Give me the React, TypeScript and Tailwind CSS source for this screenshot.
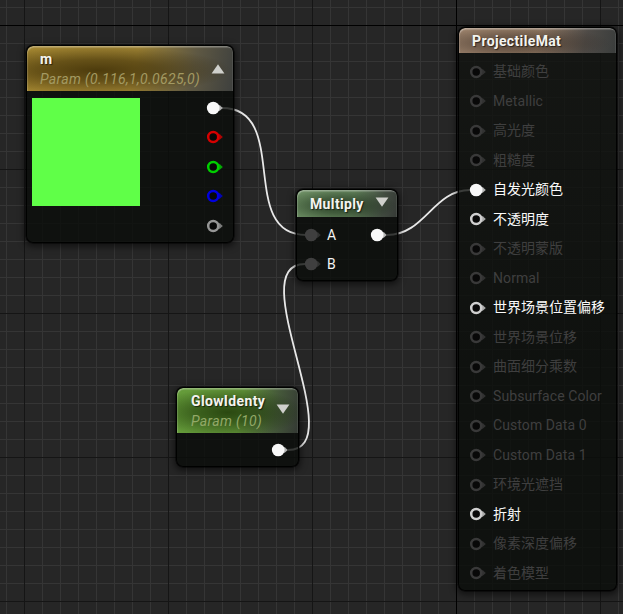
import type { ReactNode } from 'react';

const FONT = "font-['Roboto','Noto_Sans_CJK_SC',sans-serif]";

type PinProps = { color: string; filled?: boolean };

function Pin({ color, filled = false }: PinProps) {
  return (
    <svg className="block h-[14px] w-[18px] shrink-0" viewBox="0 0 18 14">
      <path d="M12 3.6 L14 4.4 L16.8 7 L14 9.6 L12 10.4 Z" fill={color} opacity={filled ? 0.7 : 0.8} />
      <circle cx="7.2" cy="7" r={filled ? 6.3 : 5} fill={filled ? color : '#080808'} stroke={filled ? 'none' : color} strokeWidth="2.5" />
    </svg>
  );
}

function Arrow({ up = false }: { up?: boolean }) {
  return (
    <svg className="block h-[10px] w-[14px]" viewBox="0 0 14 10">
      <path d={up ? 'M7 0.3 L13.4 9.6 H0.6 Z' : 'M0.6 0.4 H13.4 L7 9.7 Z'} fill="#cfd0cc" />
    </svg>
  );
}

function Node({ place, children }: { place: string; children: ReactNode }) {
  return (
    <section
      className={`absolute overflow-hidden rounded-[7px] border border-black/90 shadow-[0_0_0_0.5px_rgba(0,0,0,0.8),0_2px_6px_2px_rgba(0,0,0,0.5)] ${place}`}
    >
      {children}
    </section>
  );
}

const HEADER = 'relative shrink-0 rounded-t-[6px] shadow-[inset_1px_2px_1px_-0.5px_rgba(255,255,255,0.32),inset_-1px_0_0_rgba(255,255,255,0.08)]';
const TITLE = 'whitespace-nowrap text-[14px] leading-[18px] font-bold tracking-[0.36px] text-[#f4f4f0] [text-shadow:1px_1px_1px_rgba(0,0,0,0.6)]';
const SUB = 'whitespace-nowrap text-[14px] leading-[20px] italic tracking-[0.36px]';

const outputs = [
  { name: 'rgb', color: '#f8f8f8', filled: true },
  { name: 'r', color: '#d60000' },
  { name: 'g', color: '#00cf00' },
  { name: 'b', color: '#0000df' },
  { name: 'a', color: '#969696' },
];

const inputs = [
  { label: '基础颜色' },
  { label: 'Metallic', latin: true },
  { label: '高光度' },
  { label: '粗糙度' },
  { label: '自发光颜色', on: true, filled: true },
  { label: '不透明度', on: true },
  { label: '不透明蒙版' },
  { label: 'Normal', latin: true },
  { label: '世界场景位置偏移', on: true },
  { label: '世界场景位移' },
  { label: '曲面细分乘数' },
  { label: 'Subsurface Color', latin: true },
  { label: 'Custom Data 0', latin: true },
  { label: 'Custom Data 1', latin: true },
  { label: '环境光遮挡' },
  { label: '折射', on: true },
  { label: '像素深度偏移' },
  { label: '着色模型' },
];

function Grid() {
  const xs = Array.from({ length: 35 }, (_, i) => 6 + i * 18);
  const ys = Array.from({ length: 34 }, (_, i) => 7 + i * 18);
  return (
    <g shapeRendering="crispEdges">
      {xs.map((x) => <rect key={x} x={x} y="0" width="1" height="614" fill="#353535" />)}
      {ys.map((y) => <rect key={y} x="0" y={y} width="623" height="1" fill="#353535" />)}
      {[24, 168, 312, 600].map((x) => <rect key={x} x={x} y="0" width="1" height="614" fill="#151515" />)}
      {[169, 313, 457, 601].map((y) => <rect key={y} x="0" y={y} width="623" height="1" fill="#151515" />)}
      <rect x="456" y="0" width="1" height="614" fill="#000" />
      <rect x="0" y="25" width="623" height="1" fill="#000" />
    </g>
  );
}

export default function App() {
  return (
    <main className={`relative h-[614px] w-[623px] overflow-hidden bg-[#262626] ${FONT}`}>
      <svg className="absolute inset-0" width="623" height="614" viewBox="0 0 623 614">
        <Grid />
        <g fill="none" stroke="#e8e8e8" strokeWidth="1.8">
          <path d="M222 108 C291 108 237 235 306 235" />
          <path d="M387 235 C425 235 433 190 470 190" />
          <path d="M288 450 C353 450 240 264 305 264" />
        </g>
      </svg>

      <Node place="left-[26px] top-[45px] flex h-[198px] w-[208px] flex-col bg-[rgba(10,13,10,0.8)]">
        <header className={`${HEADER} flex h-[45px] items-center justify-between bg-[radial-gradient(ellipse_135px_24px_at_34%_54%,rgba(50,36,0,0.75),rgba(50,36,0,0.52)_45%,transparent),linear-gradient(100deg,#a28530_0%,#9c8133_52%,#5e5843_80%,#3e403e_100%)] pr-[8px] pl-[13px]`}>
          <div className="pt-[3px]">
            <h2 className={`${TITLE} mb-px -mt-px`}>m</h2>
            <p className={`${SUB} text-[#a39a62]`}>Param (0.116,1,0.0625,0)</p>
          </div>
          <Arrow up />
        </header>
        <div className="flex justify-between pt-[7px] pr-[9px] pl-[5px]">
          <div className="h-[108px] w-[108px] bg-[#60ff48]" />
          <div className="mt-[-5px] flex flex-col">
            {outputs.map((o) => (
              <div key={o.name} className="flex h-[29.5px] items-center">
                <Pin color={o.color} filled={o.filled} />
              </div>
            ))}
          </div>
        </div>
      </Node>

      <Node place="left-[296px] top-[189px] flex h-[92px] w-[102px] flex-col bg-[rgba(10,13,10,0.8)]">
        <header className={`${HEADER} flex h-[27px] items-center justify-between bg-[radial-gradient(ellipse_58px_16px_at_42%_58%,rgba(20,38,18,0.65),rgba(20,38,18,0.45)_45%,transparent),linear-gradient(100deg,#6b8d62_0%,#62825b_55%,#414b40_85%,#363a36_100%)] pr-[8px] pl-[13px]`}>
          <h2 className={TITLE}>Multiply</h2>
          <div className="pb-[4px]"><Arrow /></div>
        </header>
        <div className="flex justify-between pr-[9px] pl-[7px] pt-[3px] text-[14px] text-[#f4f4f4]">
          <div>
            {['A', 'B'].map((l) => (
              <div key={l} className="flex h-[29px] items-center gap-[5px]">
                <Pin color="#3f3f3f" filled />
                <span className="pt-[2px]">{l}</span>
              </div>
            ))}
          </div>
          <div className="flex h-[29px] items-center">
            <Pin color="#f8f8f8" filled />
          </div>
        </div>
      </Node>

      <Node place="left-[176px] top-[387px] flex h-[80px] w-[123px] flex-col bg-[rgba(10,13,10,0.8)]">
        <header className={`${HEADER} flex h-[45px] items-center justify-between bg-[radial-gradient(ellipse_78px_24px_at_42%_54%,rgba(24,48,4,0.75),rgba(24,48,4,0.5)_45%,transparent),linear-gradient(100deg,#659c3a_0%,#609138_52%,#45583a_80%,#343934_100%)] pr-[8px] pl-[14px]`}>
          <div className="pt-[3px]">
            <h2 className={`${TITLE} mb-px -mt-px`}>GlowIdenty</h2>
            <p className={`${SUB} text-[#93a968]`}>Param (10)</p>
          </div>
          <div className="pb-[4px]"><Arrow /></div>
        </header>
        <div className="flex h-[34px] items-center justify-end pr-[9px]">
          <Pin color="#f8f8f8" filled />
        </div>
      </Node>

      <Node place="left-[458px] top-[27px] flex h-[564px] w-[159px] flex-col bg-[linear-gradient(rgba(17,19,16,0.8),rgba(10,13,10,0.8)_60%)]">
        <header className={`${HEADER} flex h-[25px] items-center bg-[radial-gradient(ellipse_95px_17px_at_36%_60%,rgba(48,36,28,0.62),rgba(48,36,28,0.4)_45%,transparent),linear-gradient(100deg,#a0866f_0%,#987f69_50%,#4f4b47_80%,#3a3d3c_100%)] pl-[13px]`}>
          <h2 className={TITLE}>ProjectileMat</h2>
        </header>
        <ul className="pt-[4px] pl-[10px]">
          {inputs.map((p) => (
            <li key={p.label} className="flex h-[29.5px] items-center gap-[6px]">
              <Pin color={p.on ? (p.filled ? '#f8f8f8' : '#cfcfcf') : '#393939'} filled={p.filled} />
              <span className={`text-[14px] whitespace-nowrap ${p.on ? 'text-[#fafafa]' : 'text-[#3f3f3f]'} ${p.latin ? 'tracking-[0.08px]' : ''}`}>{p.label}</span>
            </li>
          ))}
        </ul>
      </Node>
    </main>
  );
}
